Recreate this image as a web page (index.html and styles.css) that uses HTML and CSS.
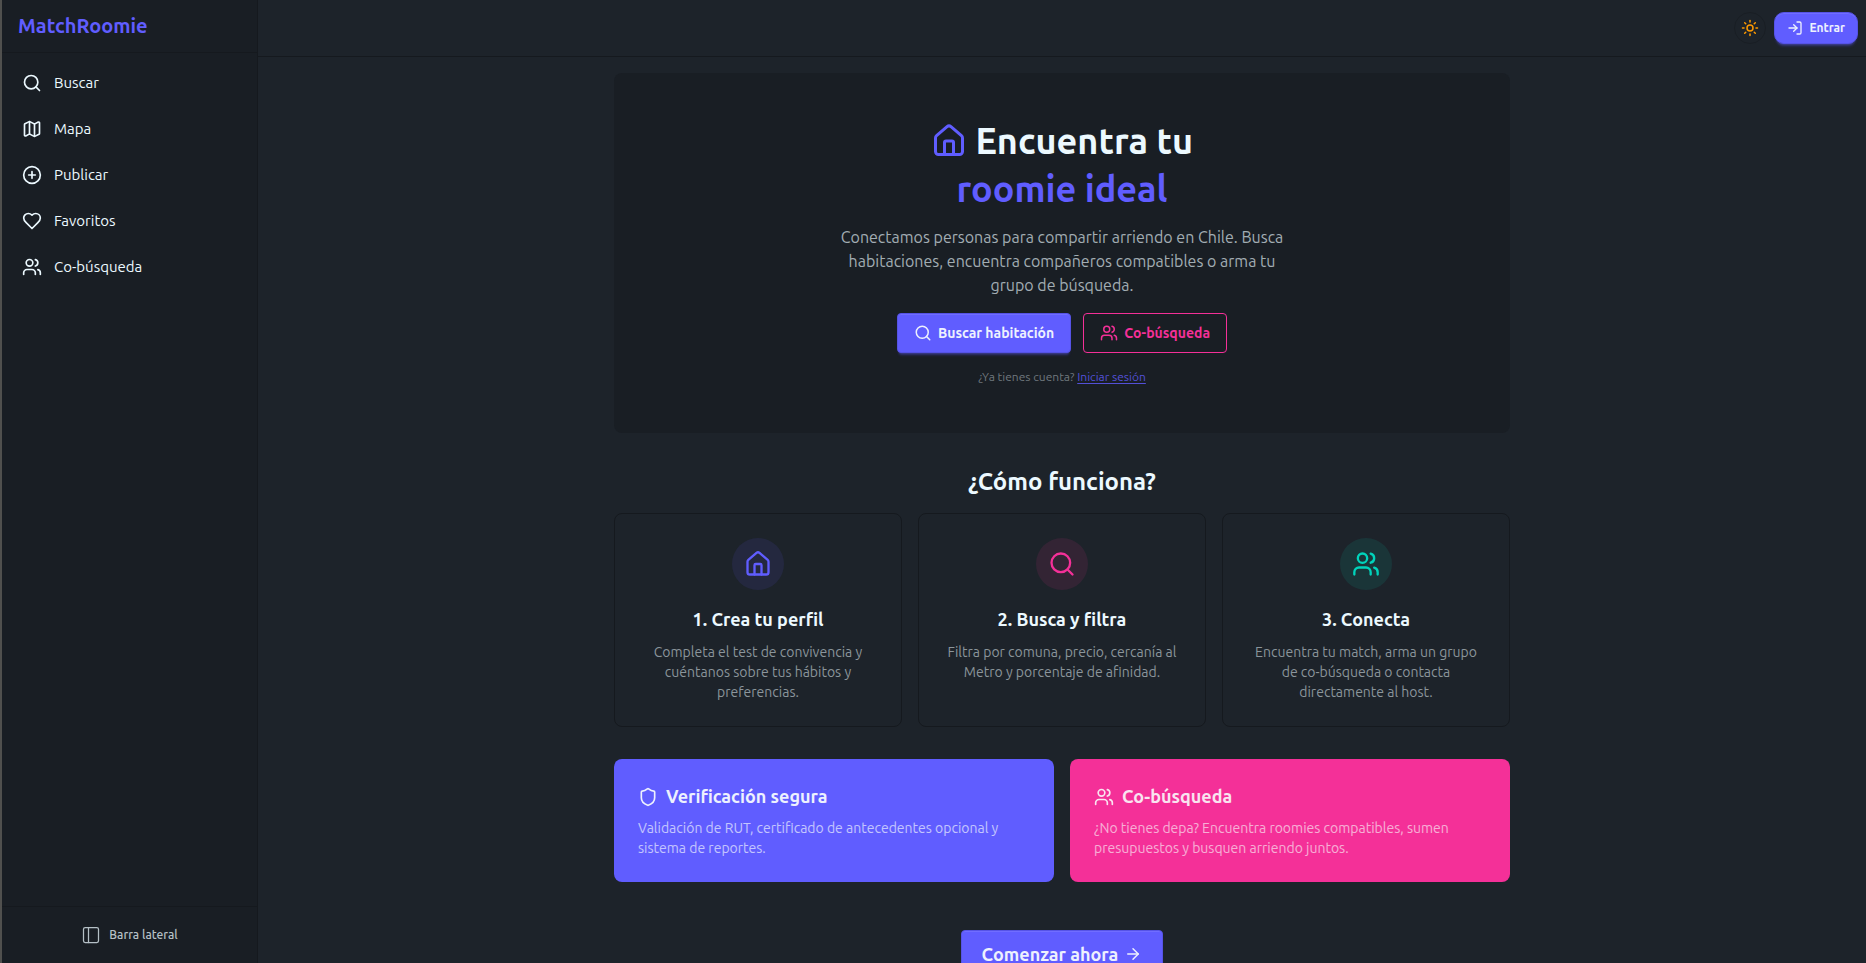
FILE: index.html
```html
<!DOCTYPE html>
<html lang="es">
<head>
  <meta charset="UTF-8">
  <meta name="viewport" content="width=device-width, initial-scale=1.0">
  <title>MatchRoomie</title>
  <link rel="stylesheet" href="styles.css">
</head>
<body>
  <!-- Icons -->
  <svg class="sprite" aria-hidden="true">
    <symbol id="i-search" viewBox="0 0 24 24"><circle cx="11" cy="11" r="8"/><path d="m21 21-4.3-4.3"/></symbol>
    <symbol id="i-map" viewBox="0 0 24 24"><path d="M14.106 5.553a2 2 0 0 0 1.788 0l3.659-1.83A1 1 0 0 1 21 4.619v12.764a1 1 0 0 1-.553.894l-4.553 2.277a2 2 0 0 1-1.788 0l-4.212-2.106a2 2 0 0 0-1.788 0l-3.659 1.83A1 1 0 0 1 3 19.381V6.618a1 1 0 0 1 .553-.894l4.553-2.277a2 2 0 0 1 1.788 0z"/><path d="M15 5.764v15"/><path d="M9 3.236v15"/></symbol>
    <symbol id="i-plus" viewBox="0 0 24 24"><circle cx="12" cy="12" r="10"/><path d="M8 12h8"/><path d="M12 8v8"/></symbol>
    <symbol id="i-heart" viewBox="0 0 24 24"><path d="M19 14c1.49-1.46 3-3.21 3-5.5A5.5 5.5 0 0 0 16.5 3c-1.76 0-3 .5-4.5 2-1.5-1.5-2.74-2-4.5-2A5.5 5.5 0 0 0 2 8.5c0 2.3 1.5 4.05 3 5.5l7 7Z"/></symbol>
    <symbol id="i-users" viewBox="0 0 24 24"><path d="M16 21v-2a4 4 0 0 0-4-4H6a4 4 0 0 0-4 4v2"/><circle cx="9" cy="7" r="4"/><path d="M22 21v-2a4 4 0 0 0-3-3.87"/><path d="M16 3.13a4 4 0 0 1 0 7.75"/></symbol>
    <symbol id="i-panel" viewBox="0 0 24 24"><rect x="3" y="3" width="18" height="18" rx="2"/><path d="M9 3v18"/></symbol>
    <symbol id="i-sun" viewBox="0 0 24 24"><circle cx="12" cy="12" r="4"/><path d="M12 2v2"/><path d="M12 20v2"/><path d="m4.93 4.93 1.41 1.41"/><path d="m17.66 17.66 1.41 1.41"/><path d="M2 12h2"/><path d="M20 12h2"/><path d="m6.34 17.66-1.41 1.41"/><path d="m19.07 4.93-1.41 1.41"/></symbol>
    <symbol id="i-login" viewBox="0 0 24 24"><path d="M15 3h4a2 2 0 0 1 2 2v14a2 2 0 0 1-2 2h-4"/><path d="m10 17 5-5-5-5"/><path d="M15 12H3"/></symbol>
    <symbol id="i-house" viewBox="0 0 24 24"><path d="M15 21v-8a1 1 0 0 0-1-1h-4a1 1 0 0 0-1 1v8"/><path d="M3 10a2 2 0 0 1 .709-1.528l7-5.999a2 2 0 0 1 2.582 0l7 5.999A2 2 0 0 1 21 10v9a2 2 0 0 1-2 2H5a2 2 0 0 1-2-2z"/></symbol>
    <symbol id="i-shield" viewBox="0 0 24 24"><path d="M20 13c0 5-3.5 7.5-7.66 8.95a1 1 0 0 1-.67-.01C7.5 20.5 4 18 4 13V6a1 1 0 0 1 1-1c2 0 4.5-1.2 6.24-2.72a1.17 1.17 0 0 1 1.52 0C14.51 3.81 17 5 19 5a1 1 0 0 1 1 1z"/></symbol>
    <symbol id="i-arrow" viewBox="0 0 24 24"><path d="M5 12h14"/><path d="m12 5 7 7-7 7"/></symbol>
  </svg>

  <aside class="sidebar">
    <a class="brand" href="#">MatchRoomie</a>
    <nav class="side-nav">
      <a href="#buscar"><svg class="icon"><use href="#i-search"/></svg>Buscar</a>
      <a href="#mapa"><svg class="icon"><use href="#i-map"/></svg>Mapa</a>
      <a href="#publicar"><svg class="icon"><use href="#i-plus"/></svg>Publicar</a>
      <a href="#favoritos"><svg class="icon"><use href="#i-heart"/></svg>Favoritos</a>
      <a href="#co-busqueda"><svg class="icon"><use href="#i-users"/></svg>Co-búsqueda</a>
    </nav>
    <div class="side-footer">
      <button type="button" class="collapse-btn"><svg class="icon"><use href="#i-panel"/></svg>Barra lateral</button>
    </div>
  </aside>

  <div class="page">
    <header class="topbar">
      <button type="button" class="theme-btn" aria-label="Cambiar tema"><svg class="icon icon-sm"><use href="#i-sun"/></svg></button>
      <a class="btn btn-primary btn-login" href="#entrar"><svg class="icon icon-xs"><use href="#i-login"/></svg>Entrar</a>
    </header>

    <main class="content">
      <section class="hero">
        <h1><svg class="icon icon-xl"><use href="#i-house"/></svg> Encuentra tu <span>roomie ideal</span></h1>
        <p class="lead">Conectamos personas para compartir arriendo en Chile. Busca habitaciones, encuentra compañeros compatibles o arma tu grupo de búsqueda.</p>
        <div class="hero-actions">
          <a class="btn btn-primary" href="#buscar"><svg class="icon icon-sm"><use href="#i-search"/></svg>Buscar habitación</a>
          <a class="btn btn-outline" href="#co-busqueda"><svg class="icon icon-sm"><use href="#i-users"/></svg>Co-búsqueda</a>
        </div>
        <p class="login-hint">¿Ya tienes cuenta? <a href="#entrar">Iniciar sesión</a></p>
      </section>

      <section class="how">
        <h2>¿Cómo funciona?</h2>
        <div class="steps">
          <article class="step">
            <div class="step-icon primary"><svg class="icon icon-lg"><use href="#i-house"/></svg></div>
            <h3>1. Crea tu perfil</h3>
            <p>Completa el test de convivencia y cuéntanos sobre tus hábitos y preferencias.</p>
          </article>
          <article class="step">
            <div class="step-icon secondary"><svg class="icon icon-lg"><use href="#i-search"/></svg></div>
            <h3>2. Busca y filtra</h3>
            <p>Filtra por comuna, precio, cercanía al Metro y porcentaje de afinidad.</p>
          </article>
          <article class="step">
            <div class="step-icon accent"><svg class="icon icon-lg"><use href="#i-users"/></svg></div>
            <h3>3. Conecta</h3>
            <p>Encuentra tu match, arma un grupo de co-búsqueda o contacta directamente al host.</p>
          </article>
        </div>
      </section>

      <section class="features">
        <article class="feature feature-primary">
          <h3><svg class="icon"><use href="#i-shield"/></svg>Verificación segura</h3>
          <p>Validación de RUT, certificado de antecedentes opcional y sistema de reportes.</p>
        </article>
        <article class="feature feature-secondary">
          <h3><svg class="icon"><use href="#i-users"/></svg>Co-búsqueda</h3>
          <p>¿No tienes depa? Encuentra roomies compatibles, sumen presupuestos y busquen arriendo juntos.</p>
        </article>
      </section>

      <div class="cta">
        <a class="btn btn-primary btn-lg" href="#comenzar">Comenzar ahora<svg class="icon icon-sm"><use href="#i-arrow"/></svg></a>
      </div>
    </main>
  </div>
</body>
</html>
```
FILE: styles.css
```css
:root {
  --base-100: #1d232a;
  --base-200: #191e24;
  --base-300: #15191e;
  --text: #ecf9ff;
  --primary: #605dff;
  --primary-text: #edf1fe;
  --secondary: #f43098;
  --secondary-text: #f9e4f0;
  --accent: #00d3bb;
}

* {
  box-sizing: border-box;
}

html {
  scrollbar-width: none;
}

body {
  margin: 0;
  display: flex;
  min-height: 100vh;
  border-left: 2px solid #50504e;
  background-color: var(--base-100);
  color: var(--text);
  font-family: Ubuntu, Lato, sans-serif;
  font-size: 16px;
  line-height: 24px;
}

h1, h2, h3, p {
  margin: 0;
}

a {
  color: inherit;
  text-decoration: none;
}

button {
  font: inherit;
  cursor: pointer;
}

.sprite {
  display: none;
}

/* Icons */
.icon {
  width: 20px;
  height: 20px;
  flex-shrink: 0;
  fill: none;
  stroke: currentColor;
  stroke-width: 2;
  stroke-linecap: round;
  stroke-linejoin: round;
}

.icon-xs { width: 16px; height: 16px; }
.icon-sm { width: 18px; height: 18px; }
.icon-lg { width: 28px; height: 28px; }
.icon-xl { width: 36px; height: 36px; }

/* Sidebar */
.sidebar {
  position: sticky;
  top: 0;
  width: 256px;
  height: 100vh;
  flex-shrink: 0;
  display: flex;
  flex-direction: column;
  background-color: var(--base-200);
  border-right: 1px solid var(--base-300);
}

.brand {
  padding: 12px 16px;
  border-bottom: 1px solid var(--base-300);
  color: var(--primary);
  font-size: 20px;
  font-weight: 600;
  line-height: 28px;
}

.side-nav {
  flex: 1;
  display: flex;
  flex-direction: column;
  gap: 2px;
  padding: 8px;
}

.side-nav a {
  display: flex;
  align-items: center;
  gap: 12px;
  padding: 10px 12px;
  border-radius: 8px;
  font-size: 15px;
}

.side-nav a:hover {
  background-color: var(--base-300);
}

.side-footer {
  padding: 12px;
  border-top: 1px solid var(--base-300);
}

.collapse-btn {
  width: 100%;
  height: 32px;
  display: flex;
  align-items: center;
  justify-content: center;
  gap: 8px;
  border: none;
  background: none;
  color: #b5c0c6;
  font-size: 12px;
  font-weight: 500;
}

.collapse-btn .icon {
  stroke-width: 1.5;
}

/* Top bar */
.page {
  flex: 1;
  min-width: 0;
}

.topbar {
  display: flex;
  align-items: center;
  justify-content: flex-end;
  gap: 8px;
  padding: 12px 8px;
  border-bottom: 1px solid var(--base-300);
}

.theme-btn {
  width: 32px;
  height: 32px;
  display: flex;
  align-items: center;
  justify-content: center;
  padding: 0;
  border: 1px solid var(--base-200);
  border-radius: 50%;
  background: none;
  color: #fe9a00;
}

/* Buttons */
.btn {
  height: 40px;
  display: inline-flex;
  align-items: center;
  gap: 6px;
  padding: 0 16px;
  border: 1px solid transparent;
  border-radius: 4px;
  font-size: 14px;
  font-weight: 600;
}

.btn-primary {
  border-color: #5653e6;
  background-color: var(--primary);
  color: var(--primary-text);
  box-shadow: inset 0 1px 0 rgba(255, 255, 255, 0.1), 0 3px 2px -2px rgba(96, 93, 255, 0.3), 0 4px 3px -2px rgba(96, 93, 255, 0.3);
}

.btn-outline {
  border-color: var(--secondary);
  color: var(--secondary);
}

.btn-login {
  height: 32px;
  padding: 0 12px;
  border-radius: 10px;
  font-size: 12px;
}

.btn-lg {
  height: 48px;
  padding: 0 20px;
  font-size: 18px;
}

/* Hero */
.content {
  max-width: 928px;
  margin: 0 auto;
  padding: 16px;
}

.hero {
  display: flex;
  flex-direction: column;
  align-items: center;
  padding: 44px 48px 48px;
  border-radius: 8px;
  background-color: var(--base-200);
  text-align: center;
}

.hero h1 {
  font-size: 36px;
  font-weight: 700;
  line-height: 48px;
}

.hero h1 .icon {
  vertical-align: -5px;
  color: var(--primary);
}

.hero h1 span {
  display: block;
  color: var(--primary);
}

.lead {
  max-width: 448px;
  margin: 12px 0 16px;
  color: #a2adb3;
}

.hero-actions {
  display: flex;
  gap: 12px;
}

.login-hint {
  margin-top: 16px;
  color: #6f777d;
  font-size: 12px;
  line-height: 16px;
}

.login-hint a {
  color: #5350d8;
  text-decoration: underline;
  text-underline-offset: 2px;
}

/* How it works */
.how {
  margin-top: 32px;
}

.how h2 {
  margin-bottom: 14px;
  font-size: 24px;
  font-weight: 700;
  line-height: 34px;
  text-align: center;
}

.steps {
  display: grid;
  grid-template-columns: repeat(3, 1fr);
  gap: 16px;
}

.step {
  display: flex;
  flex-direction: column;
  align-items: center;
  padding: 24px;
  border: 1px solid var(--base-300);
  border-radius: 8px;
  text-align: center;
}

.step-icon {
  display: flex;
  padding: 12px;
  border-radius: 50%;
}

.step-icon.primary {
  background-color: rgba(96, 93, 255, 0.1);
  color: var(--primary);
}

.step-icon.secondary {
  background-color: rgba(244, 48, 152, 0.1);
  color: var(--secondary);
}

.step-icon.accent {
  background-color: rgba(0, 211, 187, 0.1);
  color: var(--accent);
}

.step h3,
.feature h3 {
  font-size: 18px;
  font-weight: 600;
  line-height: 27px;
}

.step h3 {
  margin: 16px 0 9px;
}

.step p {
  color: #8b959b;
  font-size: 14px;
  line-height: 20px;
}

/* Features */
.features {
  display: grid;
  grid-template-columns: repeat(2, 1fr);
  gap: 16px;
  margin-top: 32px;
}

.feature {
  padding: 24px;
  border-radius: 8px;
}

.feature h3 {
  display: flex;
  align-items: center;
  gap: 8px;
  margin-bottom: 8px;
}

.feature p {
  font-size: 14px;
  line-height: 20px;
  opacity: 0.7;
}

.feature-primary {
  background-color: var(--primary);
  color: var(--primary-text);
}

.feature-secondary {
  background-color: var(--secondary);
  color: var(--secondary-text);
}

.cta {
  display: flex;
  justify-content: center;
  padding: 48px 0;
}

@media (max-width: 800px) {
  .sidebar {
    display: none;
  }

  .steps,
  .features {
    grid-template-columns: 1fr;
  }
}
```
